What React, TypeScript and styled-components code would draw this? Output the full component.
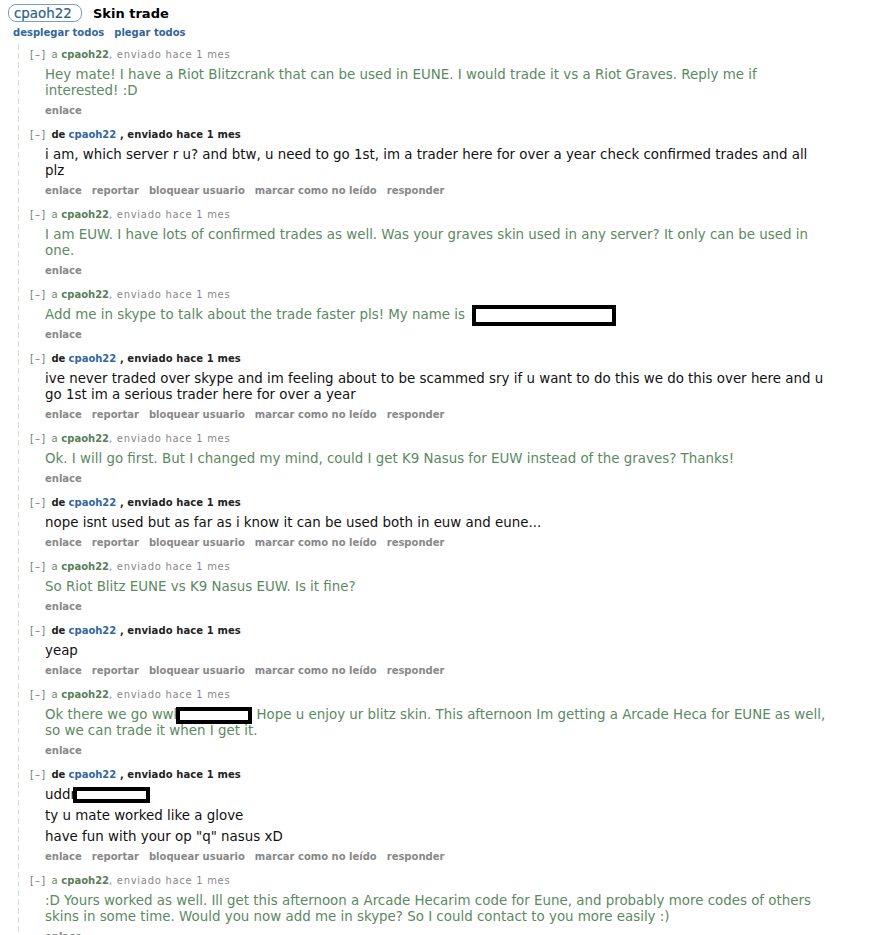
import React from "react";
import styled, { createGlobalStyle } from "styled-components";

const Global = createGlobalStyle`
  html, body { margin: 0; padding: 0; background: #fff; }
  body { font-family: "DejaVu Sans", Verdana, sans-serif; color: #222; }
`;

const Page = styled.div`
  padding: 4px 0 0 8px;
  width: 879px;
  height: 931px;
  overflow: hidden;
`;

const Header = styled.div`
  display: flex;
  align-items: center;
  height: 18px;
`;

const Pill = styled.span`
  display: inline-flex;
  align-items: center;
  box-sizing: border-box;
  width: 74px;
  height: 18px;
  padding: 0 0 0 5px;
  border: 1px solid #7d9cc0;
  border-radius: 8px;
  font-size: 13.4px;
  color: #2f5f8f;
  -webkit-text-stroke: 0.2px #2f5f8f;
`;

const Title = styled.span`
  margin-left: 11px;
  font-size: 13px;
  font-weight: bold;
  color: #000;
`;

const Toggles = styled.div`
  display: flex;
  gap: 10px;
  margin-top: 5px;
  padding-left: 5px;
  line-height: 12px;
  font-size: 10px;
  font-weight: bold;
  color: #336699;
`;

const Thread = styled.div`
  margin: 5px 0 0 10px;
  padding: 4px 0 0 12px;
  background: repeating-linear-gradient(to bottom, #dadada 0 6px, transparent 6px 9px) left top / 1px 100% no-repeat;
`;

const Entry = styled.div`
  margin-bottom: 10px;
`;

const Tagline = styled.div`
  font-size: 10px;
  line-height: 14px;
  color: #888;
  white-space: nowrap;
`;

const Expand = styled.span`
  color: #777;
  margin-right: 5px;
  letter-spacing: 1.2px;
`;

const Dir = styled.span<{ $sent: boolean }>`
  color: ${(p) => (p.$sent ? "#6b8a6b" : "#222")};
  font-weight: ${(p) => (p.$sent ? "normal" : "bold")};
  letter-spacing: ${(p) => (p.$sent ? "0.6px" : "0")};
`;

const Author = styled.span<{ $sent: boolean }>`
  font-weight: bold;
  color: ${(p) => (p.$sent ? "#5a7d5a" : "#336699")};
`;

const When = styled.span<{ $sent: boolean }>`
  color: ${(p) => (p.$sent ? "#888" : "#222")};
  font-weight: ${(p) => (p.$sent ? "normal" : "bold")};
  letter-spacing: ${(p) => (p.$sent ? "0.7px" : "0.1px")};
`;

const Body = styled.div<{ $sent: boolean }>`
  margin-top: 5px;
  padding-left: 15px;
  max-width: 783px;
  font-size: 13.4px;
  line-height: 16px;
  color: ${(p) => (p.$sent ? "#5b8a61" : "#111")};
  p { margin: 0; }
  p + p { margin-top: 5px; }
`;

const Redacted = styled.span<{ $w: number; $h: number; $b: number; $shift: number }>`
  display: inline-block;
  box-sizing: border-box;
  width: ${(p) => p.$w}px;
  height: ${(p) => p.$h}px;
  border: ${(p) => p.$b}px solid #000;
  background: #fff;
  vertical-align: middle;
  margin: -4px 0 -4px ${(p) => p.$shift}px;
`;

const Buttons = styled.div`
  display: flex;
  gap: 10px;
  margin-top: 5px;
  padding-left: 15px;
  font-size: 10px;
  line-height: 14px;
  font-weight: bold;
  color: #888;
  white-space: nowrap;
`;

type Msg = { sent: boolean; paras: React.ReactNode[] };

const msgs: Msg[] = [
  { sent: true, paras: ["Hey mate! I have a Riot Blitzcrank that can be used in EUNE. I would trade it vs a Riot Graves. Reply me if interested! :D"] },
  { sent: false, paras: ["i am, which server r u? and btw, u need to go 1st, im a trader here for over a year check confirmed trades and all plz"] },
  { sent: true, paras: ["I am EUW. I have lots of confirmed trades as well. Was your graves skin used in any server? It only can be used in one."] },
  { sent: true, paras: [<>Add me in skype to talk about the trade faster pls! My name is <Redacted $w={144} $h={21} $b={4} $shift={3} /></>] },
  { sent: false, paras: ["ive never traded over skype and im feeling about to be scammed sry if u want to do this we do this over here and u go 1st im a serious trader here for over a year"] },
  { sent: true, paras: ["Ok. I will go first. But I changed my mind, could I get K9 Nasus for EUW instead of the graves? Thanks!"] },
  { sent: false, paras: ["nope isnt used but as far as i know it can be used both in euw and eune..."] },
  { sent: true, paras: ["So Riot Blitz EUNE vs K9 Nasus EUW. Is it fine?"] },
  { sent: false, paras: ["yeap"] },
  { sent: true, paras: [<>Ok there we go wwk<Redacted $w={76} $h={17} $b={4} $shift={-5} /> Hope u enjoy ur blitz skin. This afternoon Im getting a Arcade Heca for EUNE as well, so we can trade it when I get it.</>] },
  { sent: false, paras: [<>uddr<Redacted $w={77} $h={16} $b={4} $shift={-3} /></>, "ty u mate worked like a glove", 'have fun with your op "q" nasus xD'] },
  { sent: true, paras: [":D Yours worked as well. Ill get this afternoon a Arcade Hecarim code for Eune, and probably more codes of others skins in some time. Would you now add me in skype? So I could contact to you more easily :)"] },
];

const fullButtons = ["enlace", "reportar", "bloquear usuario", "marcar como no leído", "responder"];

export default function App() {
  return (
    <>
      <Global />
      <Page>
        <Header>
          <Pill>cpaoh22</Pill>
          <Title>Skin trade</Title>
        </Header>
        <Toggles>
          <span>desplegar todos</span>
          <span>plegar todos</span>
        </Toggles>
        <Thread>
          {msgs.map((m, i) => (
            <Entry key={i}>
              <Tagline>
                <Expand>[–]</Expand>
                <Dir $sent={m.sent}>{m.sent ? "a" : "de"}</Dir>{" "}
                <Author $sent={m.sent}>cpaoh22</Author>
                <When $sent={m.sent}>{m.sent ? ", enviado hace 1 mes" : " , enviado hace 1 mes"}</When>
              </Tagline>
              <Body $sent={m.sent}>
                {m.paras.map((p, j) => (
                  <p key={j}>{p}</p>
                ))}
              </Body>
              <Buttons>
                {(m.sent ? ["enlace"] : fullButtons).map((b) => (
                  <span key={b}>{b}</span>
                ))}
              </Buttons>
            </Entry>
          ))}
        </Thread>
      </Page>
    </>
  );
}
